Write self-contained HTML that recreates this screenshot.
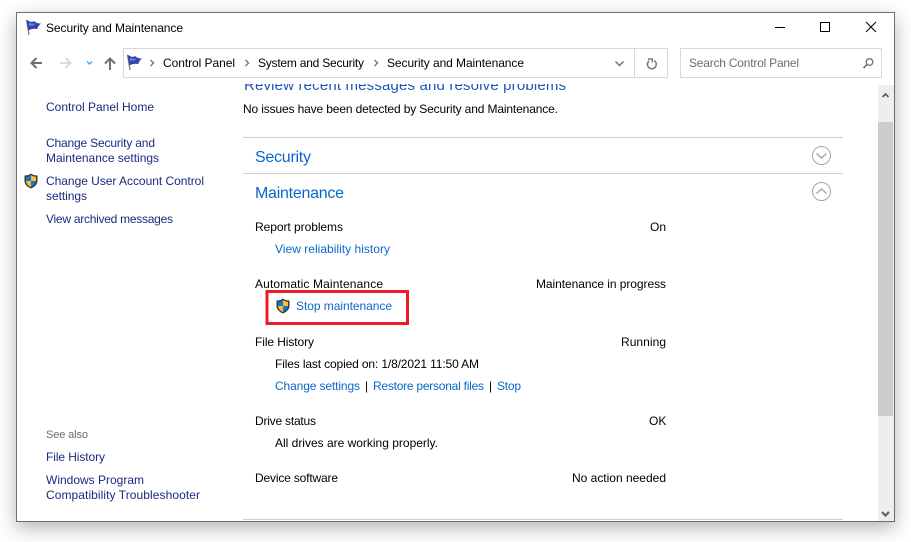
<!DOCTYPE html>
<html>
<head>
<meta charset="utf-8">
<style>
html,body{margin:0;padding:0;background:#fff;width:911px;height:542px;overflow:hidden}
#w{position:absolute;left:16px;top:12px;width:877px;height:508px;border:1px solid #6e6e6e;background:#fff;box-shadow:0 6px 18px rgba(0,0,0,.3)}
svg{position:absolute;left:0;top:0}
text{font-family:"Liberation Sans",sans-serif;font-size:12px;fill:#000}
.n{fill:#1b2a80}
.l{fill:#0a66cc}
.h{font-size:16px;fill:#0a66cc}
.g{fill:#6d6d6d}
</style>
</head>
<body>
<div id="w"></div>
<svg width="911" height="542" viewBox="0 0 911 542" xmlns="http://www.w3.org/2000/svg">
<defs>
<g id="flag">
<path d="M1.5 1 L4 16" stroke="#7a7a7a" stroke-width="1.2" fill="none"/>
<path d="M1.5 0.5 C4.5 3 7.5 3.5 9 2 C10.5 3.5 13 4.5 16 4.5 C14 6 12.8 8 12.3 10 C9.5 9.5 6.5 9.5 3.5 11.5 Z" fill="#2f45b5"/>
<path d="M4 3.5 C6 5 8 5 10 4.5 L9 6.5 C7 6.8 5.5 6.5 4.2 7 Z" fill="#6f84dc"/>
</g>
<g id="shield">
<path d="M7 0.5 C9 2 11 2.5 13.5 2.5 L13.5 8 C13.5 11.5 10.5 14 7 15.5 C3.5 14 0.5 11.5 0.5 8 L0.5 2.5 C3 2.5 5 2 7 0.5 Z" fill="#3a3a3a"/>
<path d="M7 2 L7 8 L2 8 L2 3.8 C4 3.7 5.5 3.2 7 2 Z" fill="#1773d6"/>
<path d="M7 2 C8.5 3.2 10 3.7 12 3.8 L12 8 L7 8 Z" fill="#f6c02c"/>
<path d="M2 8 L7 8 L7 14 C4.5 13 2.3 11 2 8 Z" fill="#f6c02c"/>
<path d="M7 8 L12 8 C11.7 11 9.5 13 7 14 Z" fill="#1773d6"/>
</g>
</defs>

<!-- title bar -->
<use href="#flag" x="25" y="19"/>
<text x="46" y="32" textLength="137" lengthAdjust="spacing">Security and Maintenance</text>
<path d="M775 27.5H785" stroke="#000" stroke-width="1"/>
<rect x="820.5" y="22.5" width="9" height="9" fill="none" stroke="#000"/>
<path d="M866 22L876 32M876 22L866 32" stroke="#000" stroke-width="1"/>

<!-- nav -->
<path d="M42 63H31.5M36.5 58L31.5 63L36.5 68" fill="none" stroke="#6f6f6f" stroke-width="2"/>
<path d="M60 63H70.5M65.5 58L70.5 63L65.5 68" fill="none" stroke="#dcdcdc" stroke-width="2"/>
<path d="M87 61.5L89.5 64L92 61.5" fill="none" stroke="#4aa3ee" stroke-width="1.5"/>
<path d="M110 70V59M105 63.5L110 58.5L115 63.5" fill="none" stroke="#6f6f6f" stroke-width="2"/>

<rect x="123.5" y="48.5" width="544" height="29" fill="#fff" stroke="#d9d9d9"/>
<path d="M634.5 48V78" stroke="#d9d9d9"/>
<rect x="680.5" y="48.5" width="201" height="29" fill="#fff" stroke="#d9d9d9"/>
<use href="#flag" x="126" y="54"/>
<path d="M150.5 60L153.5 63L150.5 66" fill="none" stroke="#777" stroke-width="1.4"/>
<path d="M245.5 60L248.5 63L245.5 66" fill="none" stroke="#777" stroke-width="1.4"/>
<path d="M374.5 60L377.5 63L374.5 66" fill="none" stroke="#777" stroke-width="1.4"/>
<text x="163" y="67" textLength="72" lengthAdjust="spacing">Control Panel</text>
<text x="258" y="67" textLength="106" lengthAdjust="spacing">System and Security</text>
<text x="387" y="67" textLength="137" lengthAdjust="spacing">Security and Maintenance</text>
<path d="M615.5 61.5L619.5 65.5L623.5 61.5" fill="none" stroke="#777" stroke-width="1.5"/>
<path d="M649.2 60.8A4.4 4.4 0 1 0 654.2 60.6" fill="none" stroke="#777" stroke-width="1.5"/>
<path d="M648 59H652.3V62.5" fill="none" stroke="#777" stroke-width="1.4"/>
<text x="689" y="67" textLength="110" lengthAdjust="spacing" class="g">Search Control Panel</text>
<circle cx="869.5" cy="62" r="3.3" fill="none" stroke="#777" stroke-width="1.4"/>
<path d="M867 64.5L863.5 68" stroke="#777" stroke-width="1.7"/>

<!-- clipped heading -->
<svg x="0" y="84" width="911" height="20" viewBox="0 84 911 20">
<text x="244" y="90" class="h" textLength="322" lengthAdjust="spacing" style="font-size:15px;fill:#1c55b8">Review recent messages and resolve problems</text>
</svg>

<!-- scrollbar -->
<rect x="878" y="85" width="16" height="436" fill="#eeeeee"/>
<rect x="878" y="122" width="15" height="294" fill="#cdcdcd"/>
<path d="M882.5 97L885.5 94L888.5 97" fill="none" stroke="#606060" stroke-width="1.8"/>
<path d="M882 512L885.5 515.5L889 512" fill="none" stroke="#606060" stroke-width="2.2"/>

<!-- sidebar -->
<text x="46" y="111" class="n" textLength="108" lengthAdjust="spacing">Control Panel Home</text>
<text x="46" y="147" class="n" textLength="109" lengthAdjust="spacing">Change Security and</text>
<text x="46" y="162" class="n" textLength="113" lengthAdjust="spacing">Maintenance settings</text>
<use href="#shield" x="24" y="173"/>
<text x="46" y="185" class="n" textLength="158" lengthAdjust="spacing">Change User Account Control</text>
<text x="46" y="200" class="n" textLength="41" lengthAdjust="spacing">settings</text>
<text x="46" y="223" class="n" textLength="127" lengthAdjust="spacing">View archived messages</text>
<text x="46" y="438" class="g" textLength="42" lengthAdjust="spacing" style="font-size:11px">See also</text>
<text x="46" y="461" class="n" textLength="59" lengthAdjust="spacing">File History</text>
<text x="46" y="484" class="n" textLength="98" lengthAdjust="spacing">Windows Program</text>
<text x="46" y="499" class="n" textLength="154" lengthAdjust="spacing">Compatibility Troubleshooter</text>

<!-- main -->
<text x="243" y="113" textLength="315" lengthAdjust="spacing">No issues have been detected by Security and Maintenance.</text>
<path d="M243 137.5H843M243 173.5H843M243 519.5H843" stroke="#cfcfcf"/>
<text x="255" y="162" class="h" textLength="56" lengthAdjust="spacing">Security</text>
<text x="255" y="198" class="h" textLength="89" lengthAdjust="spacing">Maintenance</text>
<circle cx="821.5" cy="155.5" r="9" fill="#fff" stroke="#a5a5a5"/>
<path d="M816.5 153.5L821.5 158L826.5 153.5" fill="none" stroke="#a5a5a5" stroke-width="1.4"/>
<circle cx="821.5" cy="191.5" r="9" fill="#fff" stroke="#a5a5a5"/>
<path d="M816.5 193.5L821.5 189L826.5 193.5" fill="none" stroke="#a5a5a5" stroke-width="1.4"/>

<text x="255" y="231" textLength="88" lengthAdjust="spacing">Report problems</text>
<text x="650" y="231" textLength="16" lengthAdjust="spacing">On</text>
<text x="275" y="253" class="l" textLength="115" lengthAdjust="spacing">View reliability history</text>

<text x="255" y="288" textLength="128" lengthAdjust="spacing">Automatic Maintenance</text>
<text x="536" y="288" textLength="130" lengthAdjust="spacing">Maintenance in progress</text>
<use href="#shield" x="276" y="298"/>
<text x="296" y="310" class="l" textLength="96" lengthAdjust="spacing">Stop maintenance</text>
<rect x="267" y="291.5" width="140.5" height="32" fill="none" stroke="#ed1c24" stroke-width="3"/>

<text x="255" y="346" textLength="59" lengthAdjust="spacing">File History</text>
<text x="621" y="346" textLength="45" lengthAdjust="spacing">Running</text>
<text x="275" y="368" textLength="204" lengthAdjust="spacing">Files last copied on: 1/8/2021 11:50 AM</text>
<text x="275" y="390" class="l" textLength="85" lengthAdjust="spacing">Change settings</text>
<text x="365" y="390">|</text>
<text x="373" y="390" class="l" textLength="111" lengthAdjust="spacing">Restore personal files</text>
<text x="489" y="390">|</text>
<text x="497" y="390" class="l" textLength="24" lengthAdjust="spacing">Stop</text>

<text x="255" y="425" textLength="61" lengthAdjust="spacing">Drive status</text>
<text x="649" y="425">OK</text>
<text x="275" y="447" textLength="163" lengthAdjust="spacing">All drives are working properly.</text>

<text x="255" y="482" textLength="83" lengthAdjust="spacing">Device software</text>
<text x="572" y="482" textLength="94" lengthAdjust="spacing">No action needed</text>
</svg>
</body>
</html>
